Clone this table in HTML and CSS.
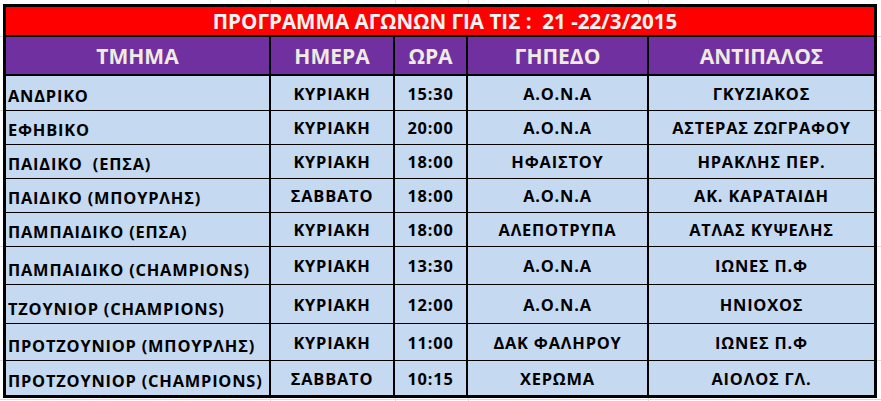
FILE: index.html
```html
<!DOCTYPE html>
<html lang="el">
<head>
<meta charset="utf-8">
<title>Πρόγραμμα αγώνων</title>
<link rel="stylesheet" href="styles.css">
</head>
<body>
<div class="sheet">
  <div class="title">ΠΡΟΓΡΑΜΜΑ ΑΓΩΝΩΝ ΓΙΑ ΤΙΣ :&nbsp; 21 -22/3/2015</div>
  <div class="row head">
    <div class="c">ΤΜΗΜΑ</div>
    <div class="c">ΗΜΕΡΑ</div>
    <div class="c">ΩΡΑ</div>
    <div class="c">ΓΗΠΕΔΟ</div>
    <div class="c">ΑΝΤΙΠΑΛΟΣ</div>
  </div>
  <div class="row body r1">
    <div class="c first">ΑΝΔΡΙΚΟ</div>
    <div class="c">ΚΥΡΙΑΚΗ</div>
    <div class="c">15:30</div>
    <div class="c">Α.Ο.Ν.Α</div>
    <div class="c">ΓΚΥΖΙΑΚΟΣ</div>
  </div>
  <div class="row body r2">
    <div class="c first">ΕΦΗΒΙΚΟ</div>
    <div class="c">ΚΥΡΙΑΚΗ</div>
    <div class="c">20:00</div>
    <div class="c">Α.Ο.Ν.Α</div>
    <div class="c">ΑΣΤΕΡΑΣ ΖΩΓΡΑΦΟΥ</div>
  </div>
  <div class="row body r3">
    <div class="c first">ΠΑΙΔΙΚΟ&nbsp; (ΕΠΣΑ)</div>
    <div class="c">ΚΥΡΙΑΚΗ</div>
    <div class="c">18:00</div>
    <div class="c">ΗΦΑΙΣΤΟΥ</div>
    <div class="c">ΗΡΑΚΛΗΣ ΠΕΡ.</div>
  </div>
  <div class="row body r4">
    <div class="c first">ΠΑΙΔΙΚΟ (ΜΠΟΥΡΛΗΣ)</div>
    <div class="c">ΣΑΒΒΑΤΟ</div>
    <div class="c">18:00</div>
    <div class="c">Α.Ο.Ν.Α</div>
    <div class="c">ΑΚ. ΚΑΡΑΤΑΙΔΗ</div>
  </div>
  <div class="row body r5">
    <div class="c first">ΠΑΜΠΑΙΔΙΚΟ (ΕΠΣΑ)</div>
    <div class="c">ΚΥΡΙΑΚΗ</div>
    <div class="c">18:00</div>
    <div class="c">ΑΛΕΠΟΤΡΥΠΑ</div>
    <div class="c">ΑΤΛΑΣ ΚΥΨΕΛΗΣ</div>
  </div>
  <div class="row body r6">
    <div class="c first">ΠΑΜΠΑΙΔΙΚΟ (CHAMPIONS)</div>
    <div class="c">ΚΥΡΙΑΚΗ</div>
    <div class="c">13:30</div>
    <div class="c">Α.Ο.Ν.Α</div>
    <div class="c">ΙΩΝΕΣ Π.Φ</div>
  </div>
  <div class="row body r7">
    <div class="c first">ΤΖΟΥΝΙΟΡ (CHAMPIONS)</div>
    <div class="c">ΚΥΡΙΑΚΗ</div>
    <div class="c">12:00</div>
    <div class="c">Α.Ο.Ν.Α</div>
    <div class="c">ΗΝΙΟΧΟΣ</div>
  </div>
  <div class="row body r8">
    <div class="c first">ΠΡΟΤΖΟΥΝΙΟΡ (ΜΠΟΥΡΛΗΣ)</div>
    <div class="c">ΚΥΡΙΑΚΗ</div>
    <div class="c">11:00</div>
    <div class="c">ΔΑΚ ΦΑΛΗΡΟΥ</div>
    <div class="c">ΙΩΝΕΣ Π.Φ</div>
  </div>
  <div class="row body r9">
    <div class="c first">ΠΡΟΤΖΟΥΝΙΟΡ (CHAMPIONS)</div>
    <div class="c">ΣΑΒΒΑΤΟ</div>
    <div class="c">10:15</div>
    <div class="c">ΧΕΡΩΜΑ</div>
    <div class="c">ΑΙΟΛΟΣ ΓΛ.</div>
  </div>
</div>
</body>
</html>
```
FILE: styles.css
```css
html, body {
  margin: 0;
  padding: 0;
  background: #ffffff;
}
body {
  width: 881px;
  height: 401px;
  overflow: hidden;
  font-family: "Open Sans", "Noto Sans", sans-serif;
  font-weight: 700;
  /* faint spreadsheet gridlines around the table */
  background-color: #ffffff;
  background-repeat: no-repeat;
  background-image:
    linear-gradient(#dadcdd, #dadcdd),
    linear-gradient(#dadcdd, #dadcdd),
    linear-gradient(#dadcdd, #dadcdd),
    linear-gradient(#dadcdd, #dadcdd),
    linear-gradient(#dadcdd, #dadcdd),
    linear-gradient(#dadcdd, #dadcdd),
    linear-gradient(#dadcdd, #dadcdd),
    linear-gradient(#dadcdd, #dadcdd),
    linear-gradient(#dadcdd, #dadcdd);
  background-size:
    1px 401px, 1px 401px, 1px 401px, 1px 401px,
    881px 1px, 881px 1px, 881px 1px, 881px 1px, 881px 1px;
  background-position:
    270px 0, 395px 0, 468px 0, 648px 0,
    0 36px, 0 110px, 0 246px, 0 360px, 0 399px;
}
.sheet {
  margin: 4px 0 0 3px;
  width: 868px;
  border: 3px solid #000;
  background: #000;
  display: flex;
  flex-direction: column;
}
.title {
  height: 28px;
  background: #ff0000;
  color: #f4f4f4;
  font-size: 20.6px;
  line-height: 28px;
  text-align: center;
  padding-left: 10px;
  white-space: pre;
  margin-bottom: 2px;
}
.row {
  display: grid;
  grid-template-columns: 263px 122px 71px 179px 225px;
  column-gap: 2px;
}
.head {
  height: 37px;
  margin-bottom: 2px;
}
.head .c {
  background: #7030a0;
  color: #eeece1;
  font-size: 21px;
  display: flex;
  align-items: center;
  justify-content: center;
}
.body {
  margin-top: 1px;
}
.r1 { margin-top: 0; height: 34px; }
.r2, .r3, .r4, .r5 { height: 33px; }
.r6 { height: 37px; }
.r7 { height: 38px; }
.r8 { height: 36px; }
.r9 { height: 34px; }
.body .c {
  background: #c5d9f1;
  color: #000;
  font-size: 16.4px;
  letter-spacing: 0.8px;
  display: flex;
  align-items: center;
  justify-content: center;
  white-space: pre;
}
.body .c.first {
  justify-content: flex-start;
  align-items: flex-end;
  padding: 0 0 3px 2px;
}
```
